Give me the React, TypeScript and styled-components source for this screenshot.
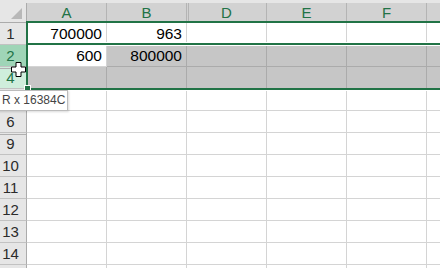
import React from "react";
import styled, { createGlobalStyle, css } from "styled-components";

const GREEN = "#217346";

type RowKind = "normal" | "active" | "selected";

type Row = {
  label: string;
  kind: RowKind;
  hiddenAbove?: boolean;
  values?: string[];
};

const columns = [
  { name: "A", hiddenBefore: false },
  { name: "B", hiddenBefore: false },
  { name: "D", hiddenBefore: true },
  { name: "E", hiddenBefore: false },
  { name: "F", hiddenBefore: false },
  { name: "", hiddenBefore: false },
];

// row 5 sits under the tooltip, so its number is not drawn
const rows: Row[] = [
  { label: "1", kind: "normal", values: ["700000", "963"] },
  { label: "2", kind: "active", values: ["600", "800000"] },
  { label: "4", kind: "selected", hiddenAbove: true },
  { label: "", kind: "normal" },
  { label: "6", kind: "normal" },
  { label: "9", kind: "normal", hiddenAbove: true },
  { label: "10", kind: "normal" },
  { label: "11", kind: "normal" },
  { label: "12", kind: "normal" },
  { label: "13", kind: "normal" },
  { label: "14", kind: "normal" },
  { label: "", kind: "normal" },
];

export default function App() {
  return (
    <>
      <GlobalStyle />
      <Sheet>
        <TopStrip />
        <HeaderRow>
          <Corner>
            <CornerMark />
          </Corner>
          {columns.map((c, i) => (
            <ColHeader key={i} $hiddenBefore={c.hiddenBefore}>
              {c.name}
            </ColHeader>
          ))}
        </HeaderRow>
        {rows.map((r, ri) => (
          <GridRow key={ri}>
            <RowHeader $kind={r.kind} $hiddenAbove={r.hiddenAbove}>
              {r.label}
            </RowHeader>
            {columns.map((c, i) => {
              const inSelection = r.kind !== "normal";
              const isActive = r.kind === "active" && i === 0;
              return (
                <Cell key={i} $shaded={inSelection && !isActive}>
                  {r.values?.[i] ?? ""}
                </Cell>
              );
            })}
          </GridRow>
        ))}

        <CopyBox />
        <SelectionBox />
        <FillHandle />

        <Tooltip>R x 16384C</Tooltip>
        <MoveCursor width="15" height="15" viewBox="0 0 15 15">
          <path
            d="M5 0.5h5v4.5h4.5v5h-4.5v4.5h-5v-4.5h-4.5v-5h4.5z"
            fill="#fff"
            stroke="#000"
            strokeWidth="1"
          />
        </MoveCursor>
      </Sheet>
    </>
  );
}

const GlobalStyle = createGlobalStyle`
  html, body {
    margin: 0;
    padding: 0;
    background: #ffffff;
    overflow: hidden;
  }
`;

const Sheet = styled.div`
  position: relative;
  width: 440px;
  height: 268px;
  overflow: hidden;
  font-family: "Liberation Sans", Arial, sans-serif;
  background: #ffffff;
`;

const TopStrip = styled.div`
  height: 3px;
  background: #e6e6e6;
`;

const HeaderRow = styled.div`
  display: flex;
  height: 20px;
`;

const Corner = styled.div`
  position: relative;
  flex: 0 0 27px;
  box-sizing: border-box;
  background: #e6e6e6;
  border-right: 1px solid #ababab;
  border-bottom: 1px solid #ababab;
`;

const CornerMark = styled.div`
  position: absolute;
  right: 4px;
  bottom: 3px;
  width: 0;
  height: 0;
  border-left: 11px solid transparent;
  border-bottom: 11px solid #b8b8b8;
`;

const ColHeader = styled.div<{ $hiddenBefore: boolean }>`
  flex: 0 0 80px;
  box-sizing: border-box;
  background-color: #d2d2d2;
  border-right: 1px solid #b4b4b4;
  border-bottom: 1px solid #ababab;
  color: ${GREEN};
  font-size: 15px;
  line-height: 20px;
  text-align: center;
  ${(p) =>
    p.$hiddenBefore &&
    css`
      background-image: linear-gradient(#b4b4b4, #b4b4b4);
      background-size: 1px 100%;
      background-position: 1px 0;
      background-repeat: no-repeat;
    `}
`;

const GridRow = styled.div`
  display: flex;
  height: 22px;
`;

const rowHeaderColors: Record<RowKind, { bg: string; fg: string }> = {
  normal: { bg: "#e6e6e6", fg: "#2b2b2b" },
  active: { bg: "#9fd5b7", fg: GREEN },
  selected: { bg: "#cfeedc", fg: GREEN },
};

const RowHeader = styled.div<{ $kind: RowKind; $hiddenAbove?: boolean }>`
  flex: 0 0 27px;
  box-sizing: border-box;
  background-color: ${(p) => rowHeaderColors[p.$kind].bg};
  color: ${(p) => rowHeaderColors[p.$kind].fg};
  border-right: 1px solid #ababab;
  border-bottom: 1px solid #c2c2c2;
  font-size: 15px;
  line-height: 22px;
  text-align: center;
  padding-right: 5px;
  ${(p) =>
    p.$hiddenAbove &&
    css`
      background-image: linear-gradient(#b0b0b0, #b0b0b0);
      background-size: 100% 1px;
      background-position: 0 1px;
      background-repeat: no-repeat;
    `}
`;

const Cell = styled.div<{ $shaded: boolean }>`
  flex: 0 0 80px;
  box-sizing: border-box;
  background: ${(p) => (p.$shaded ? "#c6c6c6" : "#ffffff")};
  border-right: 1px solid ${(p) => (p.$shaded ? "#ababab" : "#d4d4d4")};
  border-bottom: 1px solid ${(p) => (p.$shaded ? "#ababab" : "#d4d4d4")};
  color: #000;
  font-size: 15.5px;
  line-height: 22px;
  text-align: right;
  padding-right: 4px;
  white-space: nowrap;
  overflow: hidden;
`;

const CopyBox = styled.div`
  position: absolute;
  left: 26px;
  top: 21px;
  width: 500px;
  height: 24px;
  box-sizing: border-box;
  border: 2px solid ${GREEN};
  box-shadow: inset 0 -1px 0 #fff;
  pointer-events: none;
`;

const SelectionBox = styled.div`
  position: absolute;
  left: 26px;
  top: 43px;
  width: 500px;
  height: 47px;
  box-sizing: border-box;
  border: 2px solid ${GREEN};
  box-shadow: inset 0 1px 0 #fff, 0 1px 0 #fff;
  pointer-events: none;
`;

const FillHandle = styled.div`
  position: absolute;
  left: 25px;
  top: 86px;
  width: 5px;
  height: 5px;
  background: ${GREEN};
  box-shadow: 0 0 0 1px #fff;
`;

const Tooltip = styled.div`
  position: absolute;
  left: -5px;
  top: 90px;
  height: 21px;
  box-sizing: border-box;
  padding: 0 2px 0 6px;
  background: #ffffff;
  border: 1px solid #bcbcbc;
  box-shadow: 1px 1px 2px rgba(0, 0, 0, 0.15);
  color: #444;
  font-size: 12px;
  line-height: 19px;
  white-space: nowrap;
`;

const MoveCursor = styled.svg`
  position: absolute;
  left: 11px;
  top: 62px;
`;
